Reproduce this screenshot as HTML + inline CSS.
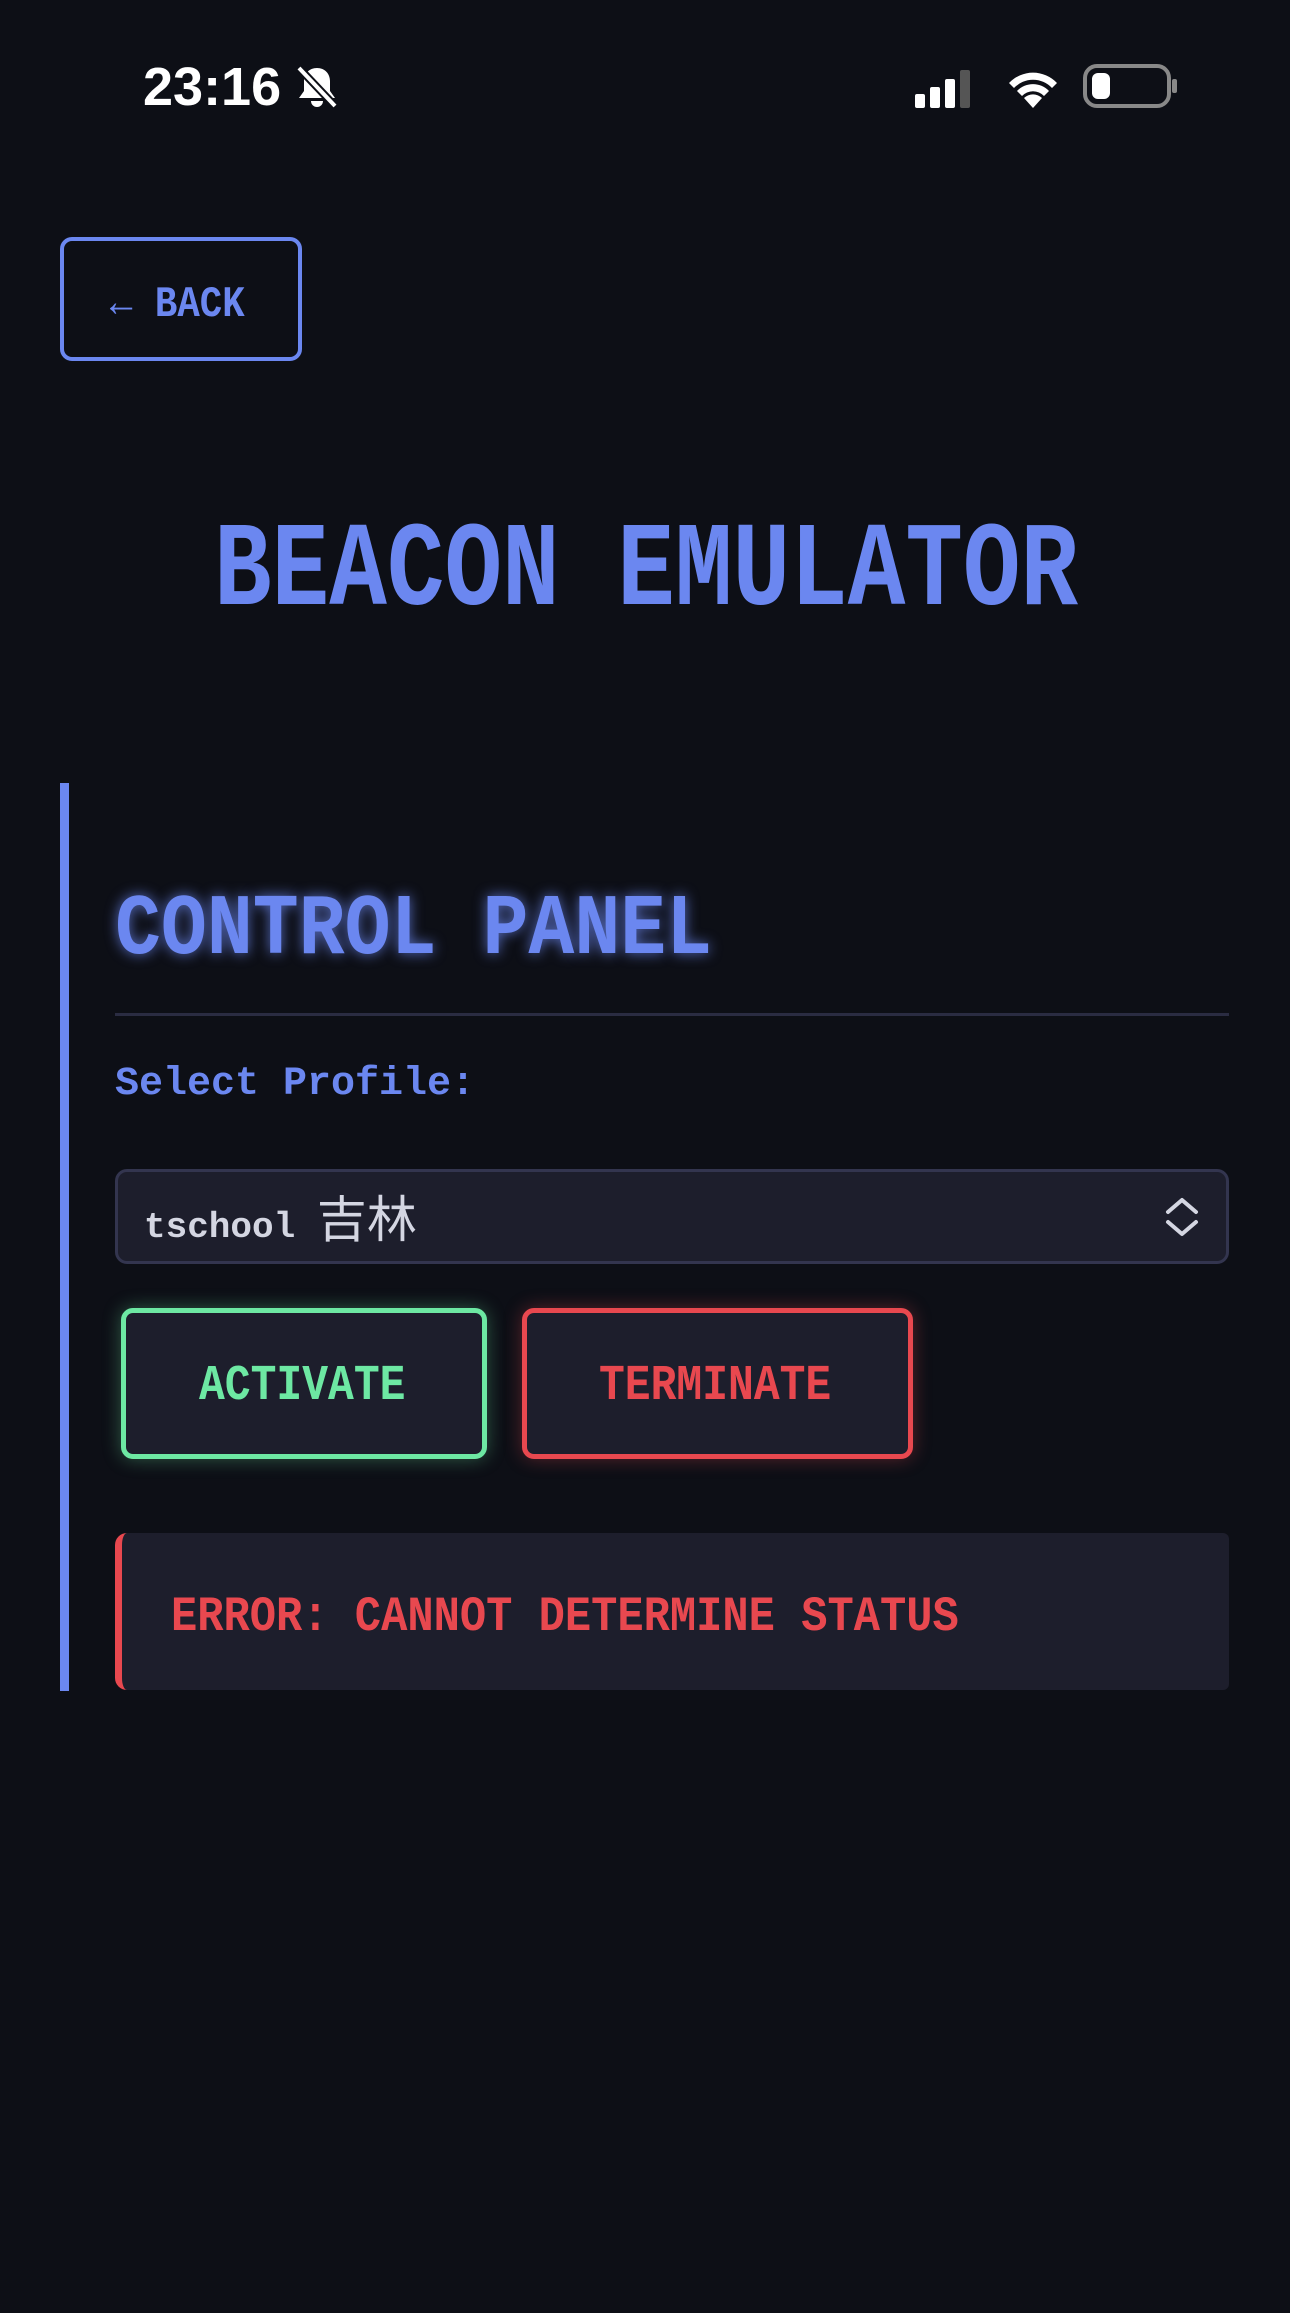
<!DOCTYPE html>
<html><head><meta charset="utf-8"><style>
*{margin:0;padding:0;box-sizing:border-box}
body{width:1290px;height:2313px;background:#0d0f16;position:relative;overflow:hidden;font-family:"Liberation Mono",monospace;}
.a{position:absolute;white-space:nowrap}
.c{display:inline-block;transform-origin:0 50%}
</style></head><body>
<div class="a" style="left:143px;top:56px;font:600 54px 'Liberation Sans',sans-serif;color:#fff;letter-spacing:0px">23:16</div>
<svg class="a" style="left:293px;top:64px" width="48" height="46" viewBox="0 0 48 46"><path d="M24 4c-8 0-13 6-13 13v10l-5 7h36l-5-7V17c0-7-5-13-13-13z" fill="#fff"/><path d="M18 37a6 6 0 0 0 12 0z" fill="#fff"/><path d="M6 4L42 42" stroke="#0d0f16" stroke-width="8"/><path d="M6 4L42 42" stroke="#fff" stroke-width="4"/></svg>
<svg class="a" style="left:915px;top:70px" width="64" height="38"><rect x="0" y="24" width="10" height="14" rx="2" fill="#fff"/><rect x="15" y="17" width="10" height="21" rx="2" fill="#fff"/><rect x="30" y="9" width="10" height="29" rx="2" fill="#fff"/><rect x="45" y="0" width="10" height="38" rx="2" fill="#555"/></svg>
<svg class="a" style="left:1003px;top:64px" width="60" height="44" viewBox="0 0 60 44"><path d="M30 44L21 34a13 13 0 0 1 18 0z" fill="#fff"/><path d="M14 27a22 22 0 0 1 32 0l-5 5a15 15 0 0 0-22 0z" fill="#fff"/><path d="M6 19a33 33 0 0 1 48 0l-5 5a26 26 0 0 0-38 0z" fill="#fff"/></svg>
<svg class="a" style="left:1083px;top:64px" width="96" height="44"><rect x="2" y="2" width="84" height="40" rx="12" fill="none" stroke="#888" stroke-width="4"/><rect x="9" y="9" width="18" height="26" rx="6" fill="#fff"/><rect x="89" y="15" width="5" height="14" rx="2" fill="#888"/></svg>

<div class="a" style="left:60px;top:237px;width:242px;height:124px;border:4px solid #6b87f0;border-radius:12px"></div>
<div class="a" style="left:110px;top:280px;font-size:44px;font-weight:bold;color:#6b87f0;line-height:50px"><span class="c" style="transform:scaleX(.85)">← BACK</span></div>

<div class="a" style="left:214px;top:503px;font-size:120px;font-weight:bold;color:#6b87f0;line-height:140px"><span class="c" style="transform:scaleX(.8)">BEACON EMULATOR</span></div>

<div class="a" style="left:60px;top:783px;width:9px;height:908px;background:#6b87f0"></div>
<div class="a" style="left:115px;top:875px;font-size:86px;font-weight:bold;color:#6b87f0;line-height:110px;text-shadow:0 0 14px rgba(107,135,240,.8)"><span class="c" style="transform:scaleX(.89)">CONTROL PANEL</span></div>
<div class="a" style="left:115px;top:1013px;width:1114px;height:3px;background:#2a2c42"></div>
<div class="a" style="left:115px;top:1060px;font-size:40px;font-weight:bold;color:#6b87f0;line-height:50px">Select Profile:</div>

<div class="a" style="left:115px;top:1169px;width:1114px;height:95px;border:3px solid #33354f;border-radius:12px;background:#1d1e2c"></div>
<div class="a" style="left:144px;top:1195px;font-size:36px;font-weight:bold;color:#d4d6e2;line-height:50px">tschool <span style="font-family:'Liberation Sans','Noto Sans CJK SC',sans-serif;font-size:50px;font-weight:normal">吉林</span></div>
<svg class="a" style="left:1162px;top:1195px" width="40" height="44"><path d="M6 17L20 5L34 17M6 27L20 39L34 27" fill="none" stroke="#d4d6e2" stroke-width="4" stroke-linecap="round" stroke-linejoin="round"/></svg>

<div class="a" style="left:121px;top:1308px;width:366px;height:151px;border:5px solid #6de8a3;border-radius:12px;background:#1d1e2c;box-shadow:0 0 18px rgba(109,232,163,.35)"></div>
<div class="a" style="left:199px;top:1359px;font-size:50px;font-weight:bold;color:#6de8a3;line-height:56px"><span class="c" style="transform:scaleX(.86)">ACTIVATE</span></div>
<div class="a" style="left:522px;top:1308px;width:391px;height:151px;border:5px solid #e8484f;border-radius:12px;background:#1d1e2c;box-shadow:0 0 18px rgba(232,72,79,.35)"></div>
<div class="a" style="left:599px;top:1359px;font-size:50px;font-weight:bold;color:#e8484f;line-height:56px"><span class="c" style="transform:scaleX(.86)">TERMINATE</span></div>

<div class="a" style="left:115px;top:1533px;width:1114px;height:157px;background:#1d1e2c;border-left:7px solid #e8484f;border-radius:12px 6px 6px 12px"></div>
<div class="a" style="left:171px;top:1589px;font-size:49px;font-weight:bold;color:#e8484f;line-height:56px"><span class="c" style="transform:scaleX(.893)">ERROR: CANNOT DETERMINE STATUS</span></div>
</body></html>
